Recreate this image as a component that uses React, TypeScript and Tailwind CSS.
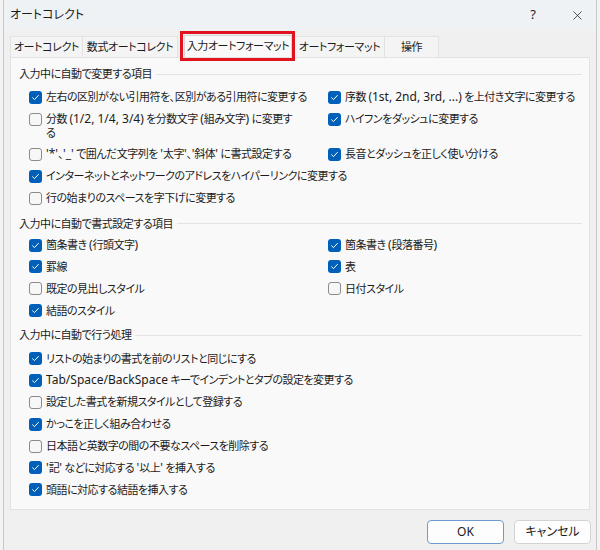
import { X } from "lucide-react";

function Box({ on }: { on: boolean }) {
  return on ? (
    <span className="mt-[0.5px] flex h-[13px] w-[13px] shrink-0 items-center justify-center rounded-[3px] bg-[#005fb8]">
      <svg width="9" height="9" viewBox="0 0 9 9">
        <path d="M1.6 4.8 L3.5 6.6 L7.4 2.4" fill="none" stroke="#fff" strokeWidth="1" strokeLinecap="round" strokeLinejoin="round" />
      </svg>
    </span>
  ) : (
    <span className="mt-[0.5px] h-[13px] w-[13px] shrink-0 rounded-[3px] border border-[#8b8b8b] bg-[#f7f7f7]" />
  );
}

// latin runs are set a touch larger, like Segoe UI next to the kana
function L({ children }: { children: React.ReactNode }) {
  return <span className="text-[12px] tracking-normal">{children}</span>;
}

function Item({ on, children }: { on: boolean; children: React.ReactNode }) {
  return (
    <div className="flex items-start gap-[4px] whitespace-nowrap py-[4.2px] leading-[13px]">
      <Box on={on} />
      <span>{children}</span>
    </div>
  );
}

function Header({ title }: { title: string }) {
  return (
    <div className="flex h-[16px] items-center gap-[4px] leading-[16px]">
      <span>{title}</span>
      <div className="mr-[-1px] h-px flex-1 bg-[#e3e3e3]" />
    </div>
  );
}

const tabs = ["オートコレクト", "数式オートコレクト", "入力オートフォーマット", "オートフォーマット", "操作"];
const tabW = ["w-[73px]", "w-[95px]", "", "w-[90px]", "w-[54px]"];

export default function App() {
  return (
    <div
      className="h-[550px] w-[600px] overflow-hidden bg-[#f3f3f3] text-[11px] tracking-[-0.5px] text-[#1b1b1b] [font-feature-settings:'palt']"
      style={{ fontFamily: '"Noto Sans", "Noto Sans CJK JP", sans-serif' }}
    >
      <div className="mx-[3px] flex h-full flex-col border-x border-[#c9c9c9] bg-[#f0f0f0]">
        {/* title bar */}
        <div className="flex h-[30px] items-center bg-[#eff2f5] pl-[6px] text-[12px] tracking-normal">
          <span>オートコレクト</span>
          <span className="ml-auto mr-[34px] text-[13px]">?</span>
          <X size={15} strokeWidth={1.2} className="mr-[11px]" />
        </div>

        {/* tabs */}
        <div className="mt-[5px] flex h-[22px] items-end whitespace-nowrap pl-[6px] text-[11px] tracking-[-0.4px]">
          {tabs.map((t, i) =>
            i === 2 ? (
              <div key={t} className="relative ml-[6px] mr-[3px] flex h-[22px] w-[108px] items-center justify-center border border-b-0 border-[#d6d6d6] bg-[#f9f9f9]">
                {t}
                <div className="pointer-events-none absolute bottom-[-4px] left-[-5px] right-[-4px] top-[-5px] border-[3px] border-[#e0141e]" />
              </div>
            ) : (
              <div
                key={t}
                className={`flex h-[21px] items-center justify-center border-r border-t border-[#e2e2e2] bg-[#f4f4f4] ${tabW[i]} ${i === 0 ? "border-l" : ""}`}
              >
                {t}
              </div>
            )
          )}
        </div>

        {/* panel */}
        <div className="mx-[6px] h-[453px] border border-[#e2e2e2] bg-[#f9f9f9] px-[8px] pt-[8px]">
          <Header title="入力中に自動で変更する項目" />
          <div className="mt-[4px] grid grid-cols-[299px_1fr] pl-[10px]">
            <Item on>左右の区別がない引用符を、区別がある引用符に変更する</Item>
            <Item on>
              序数 <L>(1st, 2nd, 3rd, ...)</L> を上付き文字に変更する
            </Item>
            <div className="flex items-start gap-[4px] whitespace-nowrap py-[4.2px] leading-[13.5px]">
              <Box on={false} />
              <span>
                分数 <L>(1/2, 1/4, 3/4)</L> を分数文字 <L>(</L>組み文字<L>)</L> に変更す
                <br />る
              </span>
            </div>
            <Item on>ハイフンをダッシュに変更する</Item>
            <Item on={false}>
              <L>'*'</L>、<L>'_'</L> で囲んだ文字列を <L>'</L>太字<L>'</L>、<L>'</L>斜体<L>'</L> に書式設定する
            </Item>
            <Item on>長音とダッシュを正しく使い分ける</Item>
            <Item on>インターネットとネットワークのアドレスをハイパーリンクに変更する</Item>
            <div />
            <Item on={false}>行の始まりのスペースを字下げに変更する</Item>
          </div>

          <div className="mt-[7px]">
            <Header title="入力中に自動で書式設定する項目" />
          </div>
          <div className="mt-[2px] grid grid-cols-[299px_1fr] pl-[10px]">
            <Item on>
              箇条書き <L>(</L>行頭文字<L>)</L>
            </Item>
            <Item on>
              箇条書き <L>(</L>段落番号<L>)</L>
            </Item>
            <Item on>罫線</Item>
            <Item on>表</Item>
            <Item on={false}>既定の見出しスタイル</Item>
            <Item on={false}>日付スタイル</Item>
            <Item on>結語のスタイル</Item>
          </div>

          <div className="mt-[6px]">
            <Header title="入力中に自動で行う処理" />
          </div>
          <div className="mt-[4px] pl-[10px]">
            <Item on>リストの始まりの書式を前のリストと同じにする</Item>
            <Item on>
              <L>Tab/Space/BackSpace</L> キーでインデントとタブの設定を変更する
            </Item>
            <Item on={false}>設定した書式を新規スタイルとして登録する</Item>
            <Item on>かっこを正しく組み合わせる</Item>
            <Item on={false}>日本語と英数字の間の不要なスペースを削除する</Item>
            <Item on>
              <L>'</L>記<L>'</L> などに対応する <L>'</L>以上<L>'</L> を挿入する
            </Item>
            <Item on>頭語に対応する結語を挿入する</Item>
          </div>
        </div>

        {/* buttons */}
        <div className="mt-[10px] flex justify-end gap-[10px] pr-[5px] text-[12px] tracking-normal">
          <button className="h-[24px] w-[77px] rounded-[4px] border-[1.5px] border-[#6c9bd2] bg-[#fdfdfd]">OK</button>
          <button className="h-[24px] w-[77px] rounded-[4px] border border-[#d3d3d3] bg-[#fdfdfd]">キャンセル</button>
        </div>
      </div>
    </div>
  );
}
